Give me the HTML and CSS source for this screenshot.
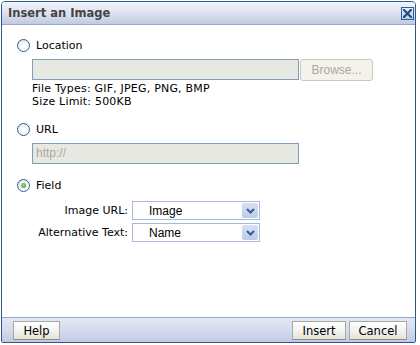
FILE: index.html
```html
<!DOCTYPE html>
<html lang="en">
<head>
  <meta charset="UTF-8" />
  <title>Insert an Image</title>
  <link rel="stylesheet" href="styles.css">
</head>
<body>
  <div class="dialog">
    <div class="titlebar">
      <span class="title">Insert an Image</span>
      <span class="close">
        <svg width="9" height="9" viewBox="0 0 9 9"><path d="M1 1 L8 8 M8 1 L1 8" stroke="#1f4a7e" stroke-width="2.2" stroke-linecap="square"/></svg>
      </span>
    </div>

    <div class="content">
      <div class="option">
        <span class="radio"></span><span class="option-label">Location</span>
      </div>
      <div class="indent">
        <div class="file-row">
          <div class="textbox file-box"></div>
          <div class="browse">Browse...</div>
        </div>
        <div class="hint">File Types: GIF, JPEG, PNG, BMP<br>Size Limit: 500KB</div>
      </div>

      <div class="option option-url">
        <span class="radio"></span><span class="option-label">URL</span>
      </div>
      <div class="indent">
        <div class="textbox url-box">http://</div>
      </div>

      <div class="option option-field">
        <span class="radio checked"></span><span class="option-label">Field</span>
      </div>
      <div class="field-grid">
        <label class="field-label">Image URL:</label>
        <div class="select">
          <span class="select-value">Image</span>
          <span class="select-arrow"><svg width="9" height="6" viewBox="0 0 9 6"><path d="M1 1 L4.5 4.5 L8 1" fill="none" stroke="#3d5a88" stroke-width="2"/></svg></span>
        </div>
        <label class="field-label">Alternative Text:</label>
        <div class="select">
          <span class="select-value">Name</span>
          <span class="select-arrow"><svg width="9" height="6" viewBox="0 0 9 6"><path d="M1 1 L4.5 4.5 L8 1" fill="none" stroke="#3d5a88" stroke-width="2"/></svg></span>
        </div>
      </div>
    </div>

    <div class="footer">
      <button class="btn btn-help">Help</button>
      <span class="spacer"></span>
      <button class="btn btn-insert">Insert</button>
      <button class="btn btn-cancel">Cancel</button>
    </div>
  </div>
</body>
</html>
```

FILE: styles.css
```css
html, body {
  margin: 0;
  padding: 0;
  background: #ffffff;
  font-family: "DejaVu Sans", Tahoma, sans-serif;
  font-size: 11px;
  color: #000;
}

body {
  padding: 1px;
}

.dialog {
  width: 415px;
  height: 342px;
  box-sizing: border-box;
  border: 1px solid #2c5a8a;
  border-radius: 4px 4px 2px 2px;
  background: #fff;
  display: flex;
  flex-direction: column;
  overflow: hidden;
}

/* title bar */
.titlebar {
  height: 22px;
  border-bottom: 1px solid #95a6c6;
  background: linear-gradient(#f2f4fa, #dce2f0 50%, #c2cae1);
  display: flex;
  align-items: center;
  padding: 0 1px 0 6px;
}

.title {
  flex: 1;
  font-weight: bold;
  font-size: 11.5px;
  color: #444;
}

.close {
  width: 13px;
  height: 13px;
  box-sizing: border-box;
  border: 1px solid #2e5b8e;
  background: linear-gradient(#e4edf9, #b9cdea);
  display: flex;
  align-items: center;
  justify-content: center;
  margin-top: 1px;
}

/* body */
.content {
  flex: 1;
  padding: 14px 0 0 15px;
}

.option {
  display: flex;
  align-items: center;
  height: 13px;
}

.option-url {
  margin-top: 15px;
}

.option-field {
  margin-top: 15px;
}

.radio {
  width: 13px;
  height: 13px;
  box-sizing: border-box;
  border: 1px solid #2f5e8e;
  border-radius: 50%;
  background: radial-gradient(circle at 65% 70%, #ffffff 30%, #dfe3ea 90%);
  display: flex;
  align-items: center;
  justify-content: center;
}

.radio.checked::after {
  content: "";
  width: 5px;
  height: 5px;
  border-radius: 50%;
  background: radial-gradient(circle at 40% 40%, #8fdc8a, #2b9a2b);
}

.option-label {
  margin-left: 6px;
}

.indent {
  padding-left: 15px;
  margin-top: 7px;
}

.file-row {
  display: flex;
  align-items: flex-start;
}

.textbox {
  height: 21px;
  box-sizing: border-box;
  border: 1px solid #7f9db9;
  background: #e8e8e2;
  color: #aca899;
  font-family: "Liberation Sans", Arial, sans-serif;
  font-size: 12px;
  line-height: 19px;
  padding-left: 3px;
}

.file-box {
  width: 267px;
}

.url-box {
  width: 267px;
}

.browse {
  width: 73px;
  height: 22px;
  box-sizing: border-box;
  border: 1px solid #cac8bb;
  border-radius: 3px;
  background: #f3f2ec;
  color: #aca899;
  font-family: "Liberation Sans", Arial, sans-serif;
  font-size: 12px;
  line-height: 20px;
  text-align: center;
  margin-left: 1px;
}

.hint {
  margin-top: 1px;
  line-height: 13px;
  letter-spacing: 0.2px;
}

/* field mapping */
.field-grid {
  display: grid;
  grid-template-columns: 111px 128px;
  column-gap: 4px;
  row-gap: 3px;
  margin-top: 9px;
  align-items: center;
}

.field-label {
  text-align: right;
}

.select {
  height: 19px;
  box-sizing: border-box;
  border: 1px solid #a7b8da;
  background: #fff;
  display: flex;
  align-items: center;
  padding: 0 1px 0 16px;
}

.select-value {
  flex: 1;
  font-family: "Liberation Sans", Arial, sans-serif;
  font-size: 12px;
}

.select-arrow {
  width: 16px;
  height: 15px;
  background: linear-gradient(#d6e1f6, #bccbeb);
  border-radius: 2px;
  display: flex;
  align-items: center;
  justify-content: center;
}

/* footer */
.footer {
  height: 25px;
  box-sizing: border-box;
  border-top: 1px solid #95a6c6;
  background: linear-gradient(#e3e8f4, #d2d9ec 60%, #c2cae2);
  display: flex;
  align-items: flex-start;
  padding: 3px 8px 0 11px;
  gap: 3px;
}

.spacer {
  flex: 1;
}

.btn {
  height: 19px;
  box-sizing: border-box;
  border: 1px solid #a9a9a3;
  border-bottom-color: #8d8d88;
  border-radius: 1px;
  background: linear-gradient(#ffffff, #f1f1ec 60%, #e2e2da);
  font-family: "DejaVu Sans", Tahoma, sans-serif;
  font-size: 11.5px;
  color: #000;
  padding: 0;
  line-height: 16px;
}

.btn-help {
  width: 47px;
}

.btn-insert {
  width: 54px;
}

.btn-cancel {
  width: 58px;
}
```
